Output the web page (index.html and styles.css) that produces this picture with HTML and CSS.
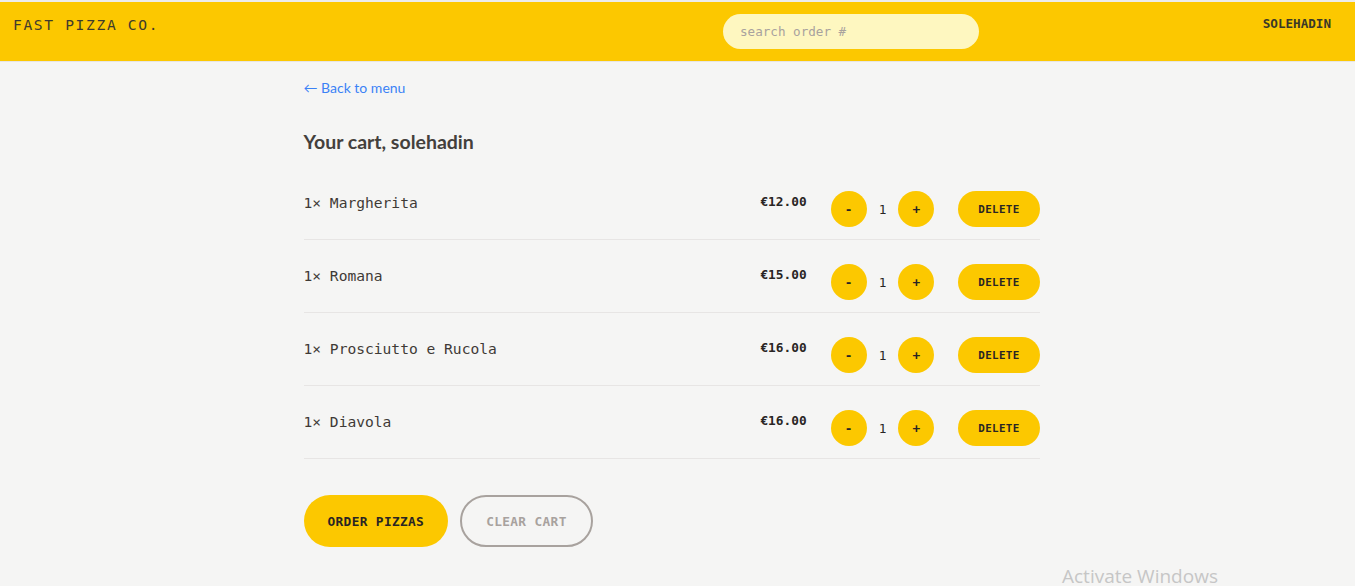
FILE: index.html
```html
<!DOCTYPE html>
<html lang="en">
<head>
<meta charset="utf-8">
<title>Fast Pizza Co.</title>
<link rel="stylesheet" href="styles.css">
</head>
<body>
<div class="topband"></div>
<header class="header">
  <a class="logo" href="#">Fast Pizza Co.</a>
  <form class="search-form">
    <input class="search" type="text" placeholder="search order #">
  </form>
  <div class="user-area"><span class="username">solehadin</span></div>
</header>
<main class="main">
  <a class="back-link" href="#">&larr; Back to menu</a>
  <h2 class="cart-title">Your cart, solehadin</h2>
  <ul class="cart-list">
    <li class="cart-item">
      <p class="item-name">1&times; Margherita</p>
      <div class="item-controls">
        <p class="price">€12.00</p>
        <div class="qty">
          <button class="round-btn">-</button>
          <span class="qty-num">1</span>
          <button class="round-btn">+</button>
        </div>
        <button class="delete-btn">Delete</button>
      </div>
    </li>
    <li class="cart-item">
      <p class="item-name">1&times; Romana</p>
      <div class="item-controls">
        <p class="price">€15.00</p>
        <div class="qty">
          <button class="round-btn">-</button>
          <span class="qty-num">1</span>
          <button class="round-btn">+</button>
        </div>
        <button class="delete-btn">Delete</button>
      </div>
    </li>
    <li class="cart-item">
      <p class="item-name">1&times; Prosciutto e Rucola</p>
      <div class="item-controls">
        <p class="price">€16.00</p>
        <div class="qty">
          <button class="round-btn">-</button>
          <span class="qty-num">1</span>
          <button class="round-btn">+</button>
        </div>
        <button class="delete-btn">Delete</button>
      </div>
    </li>
    <li class="cart-item">
      <p class="item-name">1&times; Diavola</p>
      <div class="item-controls">
        <p class="price">€16.00</p>
        <div class="qty">
          <button class="round-btn">-</button>
          <span class="qty-num">1</span>
          <button class="round-btn">+</button>
        </div>
        <button class="delete-btn">Delete</button>
      </div>
    </li>
  </ul>
  <div class="actions">
    <button class="order-btn">Order pizzas</button>
    <button class="clear-btn">Clear cart</button>
  </div>
</main>
<div class="watermark">Activate Windows</div>
</body>
</html>
```
FILE: styles.css
```css
* { box-sizing: border-box; }
html, body { margin: 0; padding: 0; }
body {
  background: #f5f5f4;
  color: #292524;
  font-family: "DejaVu Sans Mono", "Liberation Mono", monospace;
  font-size: 14.6px;
  height: 586px;
  overflow: hidden;
  position: relative;
}
.topband { height: 2px; background: #ececec; }
.header {
  display: flex;
  align-items: flex-start;
  background: #fcc800;
  border-bottom: 1px solid #e7e5e4;
  padding: 12px 24px 12px 13px;
  height: 60px;
  text-transform: uppercase;
}
.logo {
  flex: 1;
  color: #3f3b2c;
  text-decoration: none;
  letter-spacing: 1.65px;
  line-height: 22px;
  font-size: 14.6px;
}
.search-form { margin: 0; }
.search {
  display: block;
  width: 256px;
  height: 35px;
  border: none;
  border-radius: 999px;
  background: #fef7c0;
  padding: 0 17px;
  font-family: inherit;
  font-size: 12.6px;
  color: #292524;
  outline: none;
}
.search::placeholder { color: #a8a29e; }
.user-area { width: 352px; text-align: right; line-height: 18px; }
.username { font-size: 12.6px; font-weight: bold; color: #3a3828; }

.main {
  width: 768px;
  margin-left: calc(50% - 390px);
  padding: 0 16px;
}
.back-link {
  display: inline-block;
  margin-top: 16px;
  font-family: Lato, "Open Sans", sans-serif;
  font-size: 14px;
  line-height: 20px;
  color: #3b82f6;
  text-decoration: none;
}
.cart-title {
  margin: 30px 0 0;
  font-family: Lato, "Open Sans", sans-serif;
  font-size: 19.5px;
  font-weight: 700;
  line-height: 28px;
  color: #44403c;
}
.cart-list {
  list-style: none;
  margin: 11px 0 0;
  padding: 0;
}
.cart-item {
  display: flex;
  justify-content: space-between;
  align-items: flex-start;
  padding: 24px 0 12px;
  border-bottom: 1px solid #e7e5e4;
}
.item-name {
  margin: 0;
  line-height: 24px;
  color: #3f3a36;
}
.item-controls { display: flex; align-items: flex-start; gap: 24px; }
.price {
  margin: 0;
  font-size: 12.8px;
  font-weight: bold;
  line-height: 22px;
  color: #292524;
}
.qty { display: flex; align-items: center; gap: 12px; }
.qty-num { font-size: 12.8px; font-weight: 500; color: #292524; }
button {
  font-family: inherit;
  border: none;
  cursor: pointer;
  text-transform: uppercase;
}
.round-btn {
  width: 36px;
  height: 36px;
  border-radius: 50%;
  background: #fcc800;
  color: #292524;
  font-size: 12.8px;
  font-weight: bold;
  padding: 0;
}
.delete-btn {
  height: 36px;
  padding: 0 20px;
  border-radius: 999px;
  background: #fcc800;
  color: #292524;
  font-size: 10.9px;
  font-weight: bold;
  letter-spacing: 0.3px;
}
.actions { margin-top: 36px; display: flex; gap: 12px; }
.order-btn {
  height: 52px;
  padding: 0 24px;
  border-radius: 999px;
  background: #fcc800;
  color: #292524;
  font-size: 12.8px;
  font-weight: bold;
  letter-spacing: 0.35px;
}
.clear-btn {
  height: 52px;
  padding: 0 24px;
  border-radius: 999px;
  background: transparent;
  border: 2px solid #a8a29e;
  color: #a8a29e;
  font-size: 12.8px;
  font-weight: bold;
  letter-spacing: 0.35px;
}
.watermark {
  position: absolute;
  left: 1062px;
  top: 563px;
  font-family: "Open Sans", Lato, sans-serif;
  font-size: 19px;
  color: #c6c6c6;
  white-space: nowrap;
}
```
